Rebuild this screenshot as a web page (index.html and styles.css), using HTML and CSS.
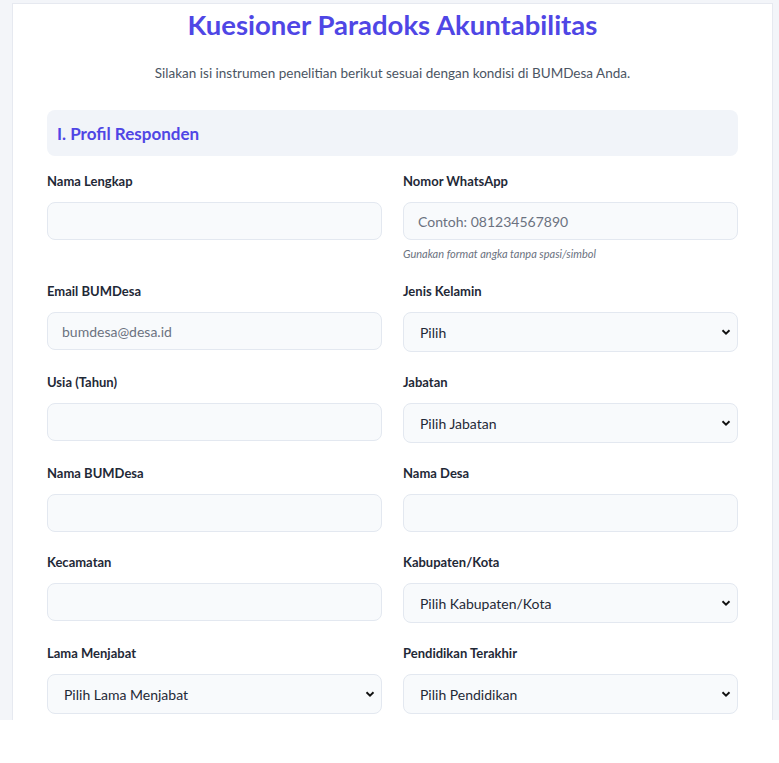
FILE: index.html
```html
<!DOCTYPE html>
<html lang="id">
<head>
<meta charset="utf-8">
<title>Kuesioner Paradoks Akuntabilitas</title>
<link rel="stylesheet" href="styles.css">
</head>
<body>
<div class="viewport">
  <div class="card">
    <h1 class="title">Kuesioner Paradoks Akuntabilitas</h1>
    <p class="subtitle">Silakan isi instrumen penelitian berikut sesuai dengan kondisi di BUMDesa Anda.</p>
    <div class="section-head">I. Profil Responden</div>
    <div class="grid">
      <div class="field">
        <label class="label">Nama Lengkap</label>
        <input class="input" type="text">
      </div>
      <div class="field">
        <label class="label">Nomor WhatsApp</label>
        <input class="input" type="text" placeholder="Contoh: 081234567890">
        <div class="hint">Gunakan format angka tanpa spasi/simbol</div>
      </div>
      <div class="field">
        <label class="label">Email BUMDesa</label>
        <input class="input" type="text" placeholder="bumdesa@desa.id">
      </div>
      <div class="field">
        <label class="label">Jenis Kelamin</label>
        <div class="select-wrap">
          <select class="select"><option>Pilih</option></select>
          <svg class="chev" viewBox="0 0 10 6" width="10" height="6"><path d="M1.5 1.2 L5 4.6 L8.5 1.2" fill="none" stroke="#111" stroke-width="1.9"/></svg>
        </div>
      </div>
      <div class="field">
        <label class="label">Usia (Tahun)</label>
        <input class="input" type="text">
      </div>
      <div class="field">
        <label class="label">Jabatan</label>
        <div class="select-wrap">
          <select class="select"><option>Pilih Jabatan</option></select>
          <svg class="chev" viewBox="0 0 10 6" width="10" height="6"><path d="M1.5 1.2 L5 4.6 L8.5 1.2" fill="none" stroke="#111" stroke-width="1.9"/></svg>
        </div>
      </div>
      <div class="field">
        <label class="label">Nama BUMDesa</label>
        <input class="input" type="text">
      </div>
      <div class="field">
        <label class="label">Nama Desa</label>
        <input class="input" type="text">
      </div>
      <div class="field">
        <label class="label">Kecamatan</label>
        <input class="input" type="text">
      </div>
      <div class="field">
        <label class="label">Kabupaten/Kota</label>
        <div class="select-wrap">
          <select class="select"><option>Pilih Kabupaten/Kota</option></select>
          <svg class="chev" viewBox="0 0 10 6" width="10" height="6"><path d="M1.5 1.2 L5 4.6 L8.5 1.2" fill="none" stroke="#111" stroke-width="1.9"/></svg>
        </div>
      </div>
      <div class="field">
        <label class="label">Lama Menjabat</label>
        <div class="select-wrap">
          <select class="select"><option>Pilih Lama Menjabat</option></select>
          <svg class="chev" viewBox="0 0 10 6" width="10" height="6"><path d="M1.5 1.2 L5 4.6 L8.5 1.2" fill="none" stroke="#111" stroke-width="1.9"/></svg>
        </div>
      </div>
      <div class="field">
        <label class="label">Pendidikan Terakhir</label>
        <div class="select-wrap">
          <select class="select"><option>Pilih Pendidikan</option></select>
          <svg class="chev" viewBox="0 0 10 6" width="10" height="6"><path d="M1.5 1.2 L5 4.6 L8.5 1.2" fill="none" stroke="#111" stroke-width="1.9"/></svg>
        </div>
      </div>
    </div>
  </div>
</div>
</body>
</html>
```
FILE: styles.css
```css
* { box-sizing: border-box; }
html, body { margin: 0; padding: 0; background: #ffffff; }
body { font-family: Lato, "Noto Sans", sans-serif; color: #1f2937; }

.viewport {
  height: 720px;
  overflow: hidden;
  background: #f3f5f9;
  padding: 3px 6px 0 12px;
}

.card {
  background: #ffffff;
  border: 1px solid #e6e9f0;
  border-bottom: none;
  min-height: 760px;
  padding: 4px 34px 20px 34px;
}

.title {
  margin: 0;
  text-align: center;
  font-size: 27.5px;
  line-height: 34px;
  font-weight: 700;
  color: #4f46e5;
}

.subtitle {
  margin: 21px 0 0 0;
  text-align: center;
  font-size: 13.5px;
  line-height: 20px;
  color: #4b5563;
}

.section-head {
  margin-top: 27px;
  height: 46px;
  background: #f1f4f9;
  border-radius: 8px;
  padding: 0 10px;
  display: flex;
  align-items: center;
  font-size: 17px;
  font-weight: 700;
  color: #4f46e5;
}

.grid {
  margin-top: 15px;
  display: grid;
  grid-template-columns: 1fr 1fr;
  column-gap: 21px;
  row-gap: 20px;
}

.field { display: flex; flex-direction: column; }

.label {
  font-size: 13px;
  line-height: 20px;
  font-weight: 700;
  color: #1f2937;
  margin-bottom: 11px;
}

.input {
  height: 38px;
  border: 1px solid #e3e8f0;
  border-radius: 8px;
  background: #f8fafc;
  padding: 0 14px;
  font-family: inherit;
  font-size: 14px;
  color: #1f2937;
  outline: none;
}
.input::placeholder { color: #6b7280; }

.hint {
  margin-top: 6px;
  font-size: 11px;
  line-height: 15px;
  font-style: italic;
  color: #6b7280;
}

.select-wrap { position: relative; }

.select {
  appearance: none;
  -webkit-appearance: none;
  width: 100%;
  height: 40px;
  border: 1px solid #e3e8f0;
  border-radius: 8px;
  background: #f8fafc;
  padding: 0 30px 0 16px;
  font-family: inherit;
  font-size: 14px;
  color: #1f2937;
  outline: none;
}

.chev {
  position: absolute;
  right: 7px;
  top: 17px;
  pointer-events: none;
}
```
